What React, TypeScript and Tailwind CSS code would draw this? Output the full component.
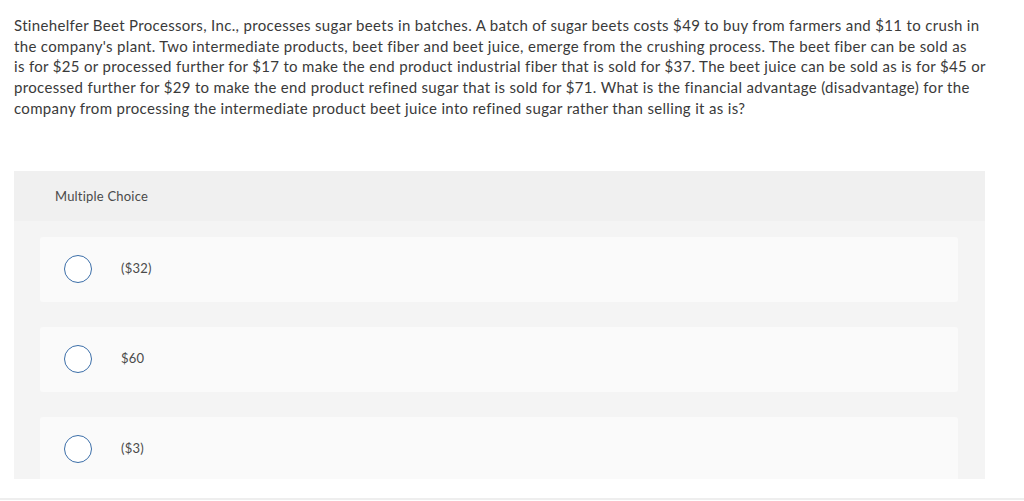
const choices = ["($32)", "$60", "($3)"];

const lines = [
  "Stinehelfer Beet Processors, Inc., processes sugar beets in batches. A batch of sugar beets costs $49 to buy from farmers and $11 to crush in",
  "the company's plant. Two intermediate products, beet fiber and beet juice, emerge from the crushing process. The beet fiber can be sold as",
  "is for $25 or processed further for $17 to make the end product industrial fiber that is sold for $37. The beet juice can be sold as is for $45 or",
  "processed further for $29 to make the end product refined sugar that is sold for $71. What is the financial advantage (disadvantage) for the",
  "company from processing the intermediate product beet juice into refined sugar rather than selling it as is?",
];

function Radio() {
  return (
    <span className="block w-[28px] h-[28px] rounded-full border-[1.5px] border-[#3b6ea8] bg-white shrink-0" />
  );
}

export default function App() {
  return (
    <div className="w-[1024px] h-[501px] overflow-hidden bg-white text-[#3a3a3a] font-['Lato','Open_Sans',sans-serif]">
      <p className="pl-[14px] pt-[15px] text-[15px] leading-[20.7px] tracking-[0.33px] whitespace-nowrap">
        {lines.map((l) => (
          <span key={l} className="block">
            {l}
          </span>
        ))}
      </p>

      <div className="mt-[52px] ml-[14px] w-[971px] h-[308px] bg-[#f4f4f4] overflow-hidden">
        <div className="h-[50px] bg-[#f0f0f0] flex items-center pl-[41px] pt-[2px] text-[13px] tracking-[0.2px] text-[#4a4a4a]">
          Multiple Choice
        </div>
        <div className="flex flex-col gap-[25px] pt-[16px] pl-[26px] pr-[27px]">
          {choices.map((c) => (
            <div key={c} className="h-[65px] rounded-[3px] bg-[#fafafa] flex items-center pl-[24px]">
              <Radio />
              <span className="ml-[29px] text-[13px] tracking-[0.2px] text-[#4a4a4a]">{c}</span>
            </div>
          ))}
        </div>
      </div>

      <div className="mt-[19px] h-[2px] bg-[#eeeeee]" />
    </div>
  );
}
